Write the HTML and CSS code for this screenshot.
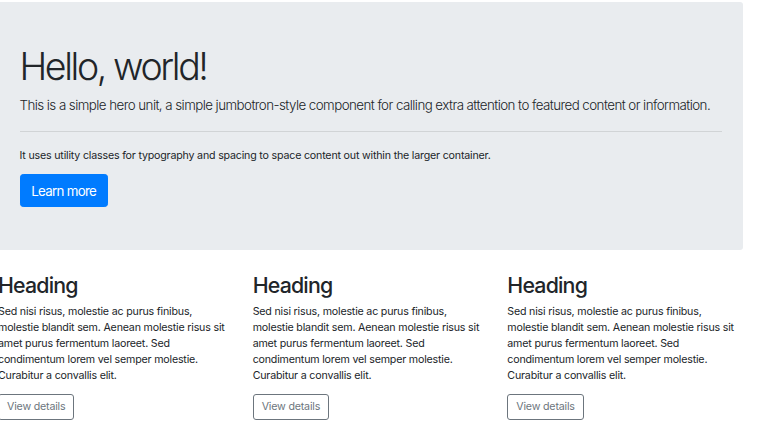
FILE: index.html
```html
<!DOCTYPE html>
<html lang="en">
<head>
<meta charset="utf-8">
<title>Jumbotron</title>
<link rel="stylesheet" href="styles.css">
</head>
<body>
<main class="page">
  <section class="jumbotron">
    <h1 class="display">Hello, world!</h1>
    <p class="lead">This is a simple hero unit, a simple jumbotron-style component for calling extra attention to featured content or information.</p>
    <hr class="divider">
    <p class="note">It uses utility classes for typography and spacing to space content out within the larger container.</p>
    <a class="btn btn-primary" href="#">Learn more</a>
  </section>
  <div class="row">
    <div class="col">
      <h2 class="heading">Heading</h2>
      <p class="text">Sed nisi risus, molestie ac purus finibus, molestie blandit sem. Aenean molestie risus sit amet purus fermentum laoreet. Sed condimentum lorem vel semper molestie. Curabitur a convallis elit.</p>
      <a class="btn btn-outline" href="#">View details</a>
    </div>
    <div class="col">
      <h2 class="heading">Heading</h2>
      <p class="text">Sed nisi risus, molestie ac purus finibus, molestie blandit sem. Aenean molestie risus sit amet purus fermentum laoreet. Sed condimentum lorem vel semper molestie. Curabitur a convallis elit.</p>
      <a class="btn btn-outline" href="#">View details</a>
    </div>
    <div class="col">
      <h2 class="heading">Heading</h2>
      <p class="text">Sed nisi risus, molestie ac purus finibus, molestie blandit sem. Aenean molestie risus sit amet purus fermentum laoreet. Sed condimentum lorem vel semper molestie. Curabitur a convallis elit.</p>
      <a class="btn btn-outline" href="#">View details</a>
    </div>
  </div>
</main>
</body>
</html>
```

FILE: styles.css
```css
html, body {
  margin: 0;
  padding: 0;
  background: #fff;
}
body {
  font-family: Inter, "Noto Sans", "Liberation Sans", sans-serif;
  font-size: 10.667px;
  line-height: 1.5;
  letter-spacing: -0.19px;
  color: #212529;
  overflow: hidden;
}
.page {
  padding-top: 2px;
}
.jumbotron {
  width: 743px;
  box-sizing: border-box;
  background: #e9ecef;
  border-radius: 0 3px 3px 0;
  padding: 42.67px 21.33px 42.67px 19.5px;
  margin-bottom: 23px;
}
.display {
  margin: 0 0 5.33px;
  font-size: 37.5px;
  font-weight: 300;
  line-height: 44.8px;
  letter-spacing: -2.4px;
}
.lead {
  margin: 0 0 10.67px;
  font-size: 13.33px;
  font-weight: 300;
  line-height: 20px;
  letter-spacing: -0.55px;
}
.divider {
  margin: 16px 0;
  border: 0;
  border-top: 1px solid rgba(0, 0, 0, 0.1);
}
.note {
  margin: 0 0 10.67px;
}
.btn {
  display: inline-block;
  text-decoration: none;
  border: 1px solid transparent;
  border-radius: 3px;
  font-weight: 400;
}
.btn-primary {
  background: #007bff;
  border-color: #007bff;
  color: #fff;
  font-size: 13.33px;
  line-height: 20px;
  padding: 5.33px 10.67px;
  border-radius: 3.2px;
  letter-spacing: -0.7px;
}
.row {
  display: grid;
  grid-template-columns: repeat(3, 254.67px);
  margin-left: -12px;
}
.col {
  padding: 0 10px;
}
.heading {
  margin: 0 0 5.33px;
  font-size: 21.33px;
  font-weight: 500;
  line-height: 25.6px;
  letter-spacing: -0.8px;
}
.text {
  margin: 0 0 10.67px;
}
.btn-outline {
  color: #6c757d;
  border-color: #6c757d;
  padding: 4px 8px;
  line-height: 16px;
}
```
